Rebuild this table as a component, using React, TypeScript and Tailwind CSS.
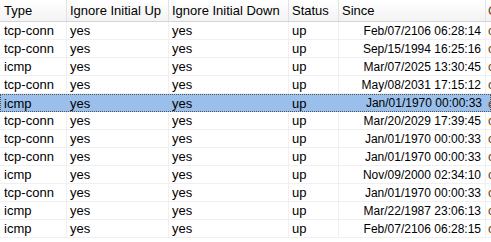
import React from "react";

type Row = { type: string; up: string; down: string; status: string; since: string };

const ROWS: Row[] = [
  { type: "tcp-conn", up: "yes", down: "yes", status: "up", since: "Feb/07/2106 06:28:14" },
  { type: "tcp-conn", up: "yes", down: "yes", status: "up", since: "Sep/15/1994 16:25:16" },
  { type: "icmp", up: "yes", down: "yes", status: "up", since: "Mar/07/2025 13:30:45" },
  { type: "tcp-conn", up: "yes", down: "yes", status: "up", since: "May/08/2031 17:15:12" },
  { type: "icmp", up: "yes", down: "yes", status: "up", since: "Jan/01/1970 00:00:33" },
  { type: "tcp-conn", up: "yes", down: "yes", status: "up", since: "Mar/20/2029 17:39:45" },
  { type: "tcp-conn", up: "yes", down: "yes", status: "up", since: "Jan/01/1970 00:00:33" },
  { type: "tcp-conn", up: "yes", down: "yes", status: "up", since: "Jan/01/1970 00:00:33" },
  { type: "icmp", up: "yes", down: "yes", status: "up", since: "Nov/09/2000 02:34:10" },
  { type: "tcp-conn", up: "yes", down: "yes", status: "up", since: "Jan/01/1970 00:00:33" },
  { type: "icmp", up: "yes", down: "yes", status: "up", since: "Mar/22/1987 23:06:13" },
  { type: "icmp", up: "yes", down: "yes", status: "up", since: "Feb/07/2106 06:28:15" },
];

const SELECTED = 4;

export default function App() {
  return (
    <div
      className="w-[491px] h-[242px] overflow-hidden bg-white text-black text-[13px] leading-none"
      style={{ fontFamily: '"Liberation Sans", Arial, sans-serif' }}
    >
      {/* header */}
      <div className="flex h-[22px] bg-gradient-to-b from-white to-[#f3f3f3] border-b border-[#d5d5d5]">
        <div className="w-[67px] shrink-0 pl-[4px] flex items-center border-r border-[#e2e2e2]">Type</div>
        <div className="w-[102px] shrink-0 pl-[3px] flex items-center border-r border-[#e2e2e2]">Ignore Initial Up</div>
        <div className="w-[120px] shrink-0 pl-[3px] flex items-center border-r border-[#e2e2e2]">Ignore Initial Down</div>
        <div className="w-[50px] shrink-0 pl-[3px] flex items-center border-r border-[#e2e2e2]">Status</div>
        <div className="w-[147px] shrink-0 pl-[3px] flex items-center border-r border-[#e2e2e2]">Since</div>
        <div className="flex-1 pl-[2px] flex items-center overflow-hidden text-[#7a3b00]">C</div>
      </div>
      {/* rows */}
      {ROWS.map((r, i) => {
        const sel = i === SELECTED;
        return (
          <div
            key={i}
            className={
              sel
                ? "flex h-[18px] bg-[#99bfea] outline outline-1 outline-dotted outline-[#555] -outline-offset-1"
                : "flex h-[18px] border-b border-[#f0f0f0]"
            }
          >
            <div className={`w-[67px] shrink-0 pl-[4px] flex items-center ${sel ? "" : "border-r border-[#f0f0f0]"}`}>{r.type}</div>
            <div className={`w-[102px] shrink-0 pl-[3px] flex items-center ${sel ? "" : "border-r border-[#f0f0f0]"}`}>{r.up}</div>
            <div className={`w-[120px] shrink-0 pl-[3px] flex items-center ${sel ? "" : "border-r border-[#f0f0f0]"}`}>{r.down}</div>
            <div className={`w-[50px] shrink-0 pl-[3px] flex items-center ${sel ? "" : "border-r border-[#f0f0f0]"}`}>{r.status}</div>
            <div className={`w-[147px] shrink-0 pr-[4px] flex items-center justify-end text-[12px] ${sel ? "" : "border-r border-[#f0f0f0]"}`}>{r.since}</div>
            <div className="flex-1 pl-[2px] flex items-center overflow-hidden text-[#7a3b00]">c</div>
          </div>
        );
      })}
    </div>
  );
}
